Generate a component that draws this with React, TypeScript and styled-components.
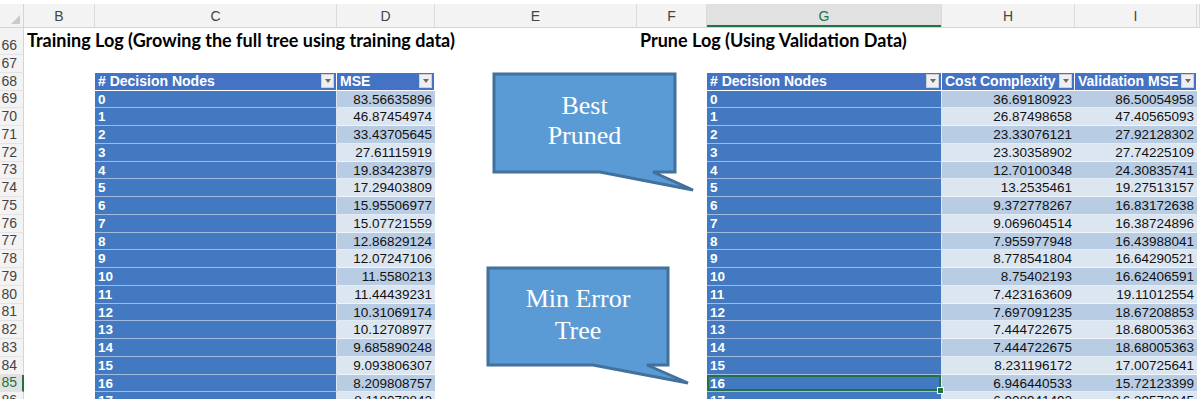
import React from 'react';
import styled, { createGlobalStyle, css } from 'styled-components';

const GlobalStyle = createGlobalStyle`
  html, body { margin: 0; padding: 0; background: #fff; overflow: hidden; }
  body { font-family: "Liberation Sans", Arial, sans-serif; }
`;

const ROW_H = 17.76;
const GREEN = '#217346';

type ColKey = 'B' | 'C' | 'D' | 'E' | 'F' | 'G' | 'H' | 'I';
const COLS: [ColKey, number][] = [
  ['B', 71], ['C', 242], ['D', 98], ['E', 202], ['F', 70], ['G', 235], ['H', 133], ['I', 122],
];

type Variant = 'plain' | 'head' | 'key' | 'even' | 'odd';

const Sheet = styled.div`
  position: relative;
  width: 1200px;
  height: 399px;
  overflow: hidden;
  padding-top: 4px;
  box-sizing: border-box;
  background: #fff;
`;

const ColHeadRow = styled.div`
  display: flex;
  height: 24px;
  background: #f3f3f3;
  border-bottom: 1px solid #d4d4d4;
  box-sizing: border-box;
`;

const Corner = styled.div`
  width: 24px;
  flex: none;
  position: relative;
  border-right: 1px solid #d4d4d4;
  box-sizing: border-box;
  &::after {
    content: '';
    position: absolute;
    right: 3px;
    bottom: 3px;
    border-left: 9px solid transparent;
    border-bottom: 9px solid #c9c9c9;
  }
`;

const ColLetter = styled.div<{ $w?: number; $active?: boolean }>`
  ${(p) => (p.$w ? `width: ${p.$w}px; flex: none;` : 'flex: 1;')}
  display: flex;
  align-items: center;
  justify-content: center;
  font-size: 14px;
  color: #444;
  border-right: 1px solid #dadada;
  box-sizing: border-box;
  ${(p) =>
    p.$active &&
    css`
      background: #e1e1e1;
      color: ${GREEN};
      box-shadow: inset 0 -2px 0 ${GREEN};
    `}
`;

const Row = styled.div<{ $h?: number }>`
  display: flex;
  height: ${(p) => p.$h ?? ROW_H}px;
`;

const RowNum = styled.div<{ $active?: boolean }>`
  width: 24px;
  flex: none;
  box-sizing: border-box;
  background: #f3f3f3;
  border-right: 1px solid #d4d4d4;
  border-bottom: 1px solid #e3e3e3;
  display: flex;
  align-items: flex-end;
  justify-content: flex-end;
  padding: 0 6px 1px 0;
  font-size: 14px;
  color: #444;
  ${(p) =>
    p.$active &&
    css`
      color: ${GREEN};
      background: #e1e1e1;
      border-right: 2px solid ${GREEN};
      padding-right: 5px;
    `}
`;

const Cell = styled.div<{ $w?: number; $v: Variant; $sel?: boolean; $title?: boolean }>`
  ${(p) => (p.$w ? `width: ${p.$w}px; flex: none;` : 'flex: 1;')}
  box-sizing: border-box;
  display: flex;
  align-items: center;
  white-space: nowrap;
  font-size: 13.5px;
  ${(p) => {
    switch (p.$v) {
      case 'head':
        return css`
          background: #4472c4;
          color: #fff;
          font-weight: 700;
          font-size: 14px;
          justify-content: space-between;
          padding-left: 3px;
          border-right: 1px solid #fff;
          border-bottom: 1px solid #fff;
        `;
      case 'key':
        return css`
          background: #4279c0;
          color: #fff;
          font-weight: 700;
          padding-left: 3px;
          border-right: 1px solid #dfe7f3;
          border-bottom: 1px solid rgba(255, 255, 255, 0.5);
        `;
      case 'even':
        return css`
          background: #b8cce4;
          color: #111;
          justify-content: flex-end;
          padding-right: 3px;
          border-bottom: 1px solid rgba(255, 255, 255, 0.6);
        `;
      case 'odd':
        return css`
          background: #dce6f1;
          color: #111;
          justify-content: flex-end;
          padding-right: 3px;
          border-bottom: 1px solid rgba(255, 255, 255, 0.6);
        `;
      default:
        return css`
          overflow: visible;
        `;
    }
  }}
  ${(p) =>
    p.$title &&
    css`
      align-items: flex-end;
      padding: 0 0 4px 3px;
    `}
  ${(p) =>
    p.$sel &&
    css`
      position: relative;
      box-shadow: inset 0 0 0 2px ${GREEN};
      &::after {
        content: '';
        position: absolute;
        right: -3px;
        bottom: -3px;
        width: 5px;
        height: 5px;
        background: ${GREEN};
        border: 1px solid #fff;
      }
    `}
`;

const Title = styled.span`
  font-family: Lato, "Open Sans", sans-serif;
  font-weight: 700;
  font-size: 18px;
  color: #000;
`;

const Dropdown = styled.span`
  width: 13px;
  height: 14px;
  flex: none;
  margin-right: 2px;
  background: #efefef;
  border: 1px solid #d0d0d0;
  box-sizing: border-box;
  display: flex;
  align-items: center;
  justify-content: center;
  &::after {
    content: '';
    border-left: 3.5px solid transparent;
    border-right: 3.5px solid transparent;
    border-top: 4px solid #6a6a6a;
  }
`;

const CalloutWrap = styled.div<{ $x: number; $y: number; $w: number; $h: number }>`
  position: absolute;
  left: ${(p) => p.$x}px;
  top: ${(p) => p.$y}px;
  width: ${(p) => p.$w}px;
  height: ${(p) => p.$h}px;
  pointer-events: none;
`;

const CalloutSvg = styled.svg`
  position: absolute;
  left: 0;
  top: 0;
  overflow: visible;
`;

const CalloutText = styled.div<{ $w: number; $h: number; $lh: number }>`
  position: absolute;
  left: 2px;
  top: 2px;
  width: ${(p) => p.$w}px;
  height: ${(p) => p.$h}px;
  display: flex;
  flex-direction: column;
  align-items: center;
  justify-content: center;
  font-family: "Liberation Serif", "Times New Roman", serif;
  font-size: 26px;
  line-height: ${(p) => p.$lh}px;
  color: #fff;
  padding-bottom: 4px;
  box-sizing: border-box;
`;

type CalloutProps = {
  x: number; y: number; w: number; h: number;
  tl: number; tr: number; tx: number; ty: number;
  lines: string[]; lh: number;
};

function Callout({ x, y, w, h, tl, tr, tx, ty, lines, lh }: CalloutProps) {
  const W = Math.max(w, tx - x) + 4;
  const H = ty - y + 4;
  const o = 2;
  const d = `M${o},${o} H${o + w} V${o + h} H${o + tr - x} L${o + tx - x},${o + ty - y} L${o + tl - x},${o + h} H${o} Z`;
  return (
    <CalloutWrap $x={x - 2} $y={y - 2} $w={W} $h={H}>
      <CalloutSvg width={W} height={H} viewBox={`0 0 ${W} ${H}`}>
        <path d={d} fill="#5b9bd5" stroke="#41719c" strokeWidth={3} strokeLinejoin="miter" />
      </CalloutSvg>
      <CalloutText $w={w} $h={h} $lh={lh}>
        {lines.map((l) => (
          <span key={l}>{l}</span>
        ))}
      </CalloutText>
    </CalloutWrap>
  );
}

const train: [string, string][] = [
  ['0', '83.56635896'], ['1', '46.87454974'], ['2', '33.43705645'], ['3', '27.61115919'],
  ['4', '19.83423879'], ['5', '17.29403809'], ['6', '15.95506977'], ['7', '15.07721559'],
  ['8', '12.86829124'], ['9', '12.07247106'], ['10', '11.5580213'], ['11', '11.44439231'],
  ['12', '10.31069174'], ['13', '10.12708977'], ['14', '9.685890248'], ['15', '9.093806307'],
  ['16', '8.209808757'], ['17', '8.118078842'],
];

const prune: [string, string, string][] = [
  ['0', '36.69180923', '86.50054958'], ['1', '26.87498658', '47.40565093'],
  ['2', '23.33076121', '27.92128302'], ['3', '23.30358902', '27.74225109'],
  ['4', '12.70100348', '24.30835741'], ['5', '13.2535461', '19.27513157'],
  ['6', '9.372778267', '16.83172638'], ['7', '9.069604514', '16.38724896'],
  ['8', '7.955977948', '16.43988041'], ['9', '8.778541804', '16.64290521'],
  ['10', '8.75402193', '16.62406591'], ['11', '7.423163609', '19.11012554'],
  ['12', '7.697091235', '18.67208853'], ['13', '7.444722675', '18.68005363'],
  ['14', '7.444722675', '18.68005363'], ['15', '8.231196172', '17.00725641'],
  ['16', '6.946440533', '15.72123399'], ['17', '6.908941492', '16.39573045'],
];

type CellSpec = { v: Variant; content?: React.ReactNode; sel?: boolean; title?: boolean };

function SheetRow({ num, h, cells, active }: { num: number; h?: number; cells: Partial<Record<ColKey, CellSpec>>; active?: boolean }) {
  return (
    <Row $h={h}>
      <RowNum $active={active}>{num}</RowNum>
      {COLS.map(([k, w]) => {
        const c = cells[k] ?? { v: 'plain' as Variant };
        return (
          <Cell key={k} $w={w} $v={c.v} $sel={c.sel} $title={c.title}>
            {c.content}
          </Cell>
        );
      })}
      <Cell $v="plain" />
    </Row>
  );
}

function Head({ label }: { label: string }) {
  return (
    <>
      <span>{label}</span>
      <Dropdown />
    </>
  );
}

export default function App() {
  return (
    <>
      <GlobalStyle />
      <Sheet>
        <ColHeadRow>
          <Corner />
          {COLS.map(([k, w]) => (
            <ColLetter key={k} $w={w} $active={k === 'G'}>
              {k}
            </ColLetter>
          ))}
          <ColLetter />
        </ColHeadRow>
        <SheetRow
          num={66}
          h={27.24}
          cells={{
            B: { v: 'plain', title: true, content: <Title>Training Log (Growing the full tree using training data)</Title> },
            F: { v: 'plain', title: true, content: <Title>Prune Log (Using Validation Data)</Title> },
          }}
        />
        <SheetRow num={67} cells={{}} />
        <SheetRow
          num={68}
          cells={{
            C: { v: 'head', content: <Head label="# Decision Nodes" /> },
            D: { v: 'head', content: <Head label="MSE" /> },
            G: { v: 'head', content: <Head label="# Decision Nodes" /> },
            H: { v: 'head', content: <Head label="Cost Complexity" /> },
            I: { v: 'head', content: <Head label="Validation MSE" /> },
          }}
        />
        {train.map(([n, mse], i) => {
          const stripe: Variant = i % 2 === 0 ? 'even' : 'odd';
          const p = prune[i];
          return (
            <SheetRow
              key={n}
              num={69 + i}
              active={i === 16}
              cells={{
                C: { v: 'key', content: n },
                D: { v: stripe, content: mse },
                G: { v: 'key', content: p[0], sel: i === 16 },
                H: { v: stripe, content: p[1] },
                I: { v: stripe, content: p[2] },
              }}
            />
          );
        })}
        <Callout x={494} y={74} w={181} h={98} tl={600} tr={653} tx={693} ty={190} lines={['Best', 'Pruned']} lh={30} />
        <Callout x={488} y={268} w={180} h={97} tl={593} tr={647} tx={688} ty={383} lines={['Min Error', 'Tree']} lh={32} />
      </Sheet>
    </>
  );
}
